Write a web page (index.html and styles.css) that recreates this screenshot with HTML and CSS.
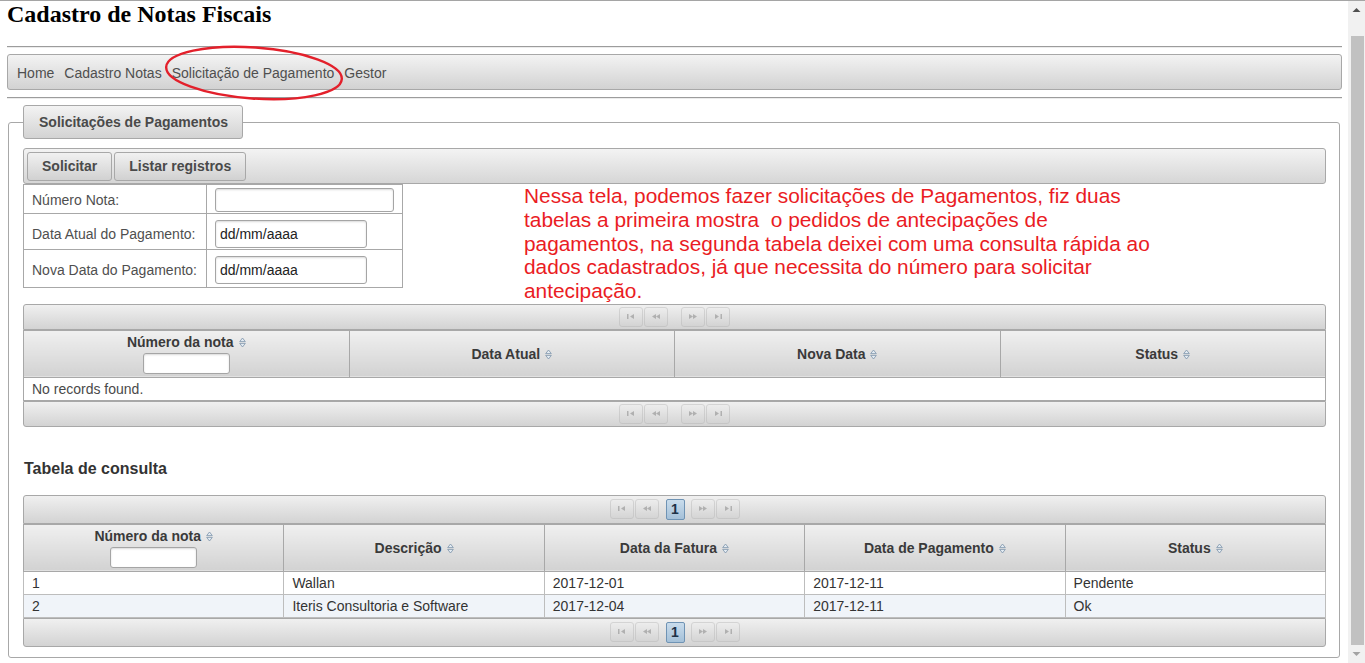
FILE: index.html
```html
<!DOCTYPE html>
<html lang="pt-BR">
<head>
<meta charset="utf-8">
<title>Cadastro de Notas Fiscais</title>
<link rel="stylesheet" href="styles.css">
</head>
<body>
<div class="screen">
  <div class="page">
    <h1 class="title">Cadastro de Notas Fiscais</h1>
    <hr class="rule">
    <nav class="menubar">
      <a class="menu-item">Home</a>
      <a class="menu-item">Cadastro Notas</a>
      <a class="menu-item">Solicitação de Pagamento</a>
      <a class="menu-item">Gestor</a>
    </nav>
    <svg class="highlight" width="184" height="62" viewBox="0 0 184 62"><ellipse cx="92" cy="31" rx="88" ry="25.5" transform="rotate(4 92 31)" fill="none" stroke="#e3202b" stroke-width="2.4"/></svg>
    <hr class="rule rule-bottom">

    <fieldset class="panel">
      <legend class="panel-legend">Solicitações de Pagamentos</legend>

      <div class="toolbar">
        <button class="btn" type="button">Solicitar</button>
        <button class="btn" type="button">Listar registros</button>
      </div>

      <div class="form-row">
        <table class="form-grid">
          <colgroup><col class="col-label"><col class="col-field"></colgroup>
          <tr>
            <td class="label">Número Nota:</td>
            <td><input class="field field-wide" type="text"></td>
          </tr>
          <tr class="date-row">
            <td class="label">Data Atual do Pagamento:</td>
            <td><input class="field field-date" type="text" value="dd/mm/aaaa"></td>
          </tr>
          <tr class="date-row">
            <td class="label">Nova Data do Pagamento:</td>
            <td><input class="field field-date" type="text" value="dd/mm/aaaa"></td>
          </tr>
        </table>
        <p class="note">Nessa tela, podemos fazer solicitações de Pagamentos, fiz duas<br>tabelas a primeira mostra&nbsp; o pedidos de antecipações de<br>pagamentos, na segunda tabela deixei com uma consulta rápida ao<br>dados cadastrados, já que necessita do número para solicitar<br>antecipação.</p>
      </div>

      <div class="datatable dt-requests">
        <div class="paginator paginator-top">
          <span class="pg-btn pg-gap"><svg width="10" height="7" viewBox="0 0 10 7"><rect x="1" y="1" width="1.5" height="5"/><path d="M8 1 L4 3.5 L8 6Z"/></svg></span>
          <span class="pg-btn"><svg width="10" height="7" viewBox="0 0 10 7"><path d="M5 1 L1 3.5 L5 6Z M9 1 L5 3.5 L9 6Z"/></svg></span>
          <span class="pg-pages"></span>
          <span class="pg-btn pg-gap"><svg width="10" height="7" viewBox="0 0 10 7"><path d="M1 1 L5 3.5 L1 6Z M5 1 L9 3.5 L5 6Z"/></svg></span>
          <span class="pg-btn"><svg width="10" height="7" viewBox="0 0 10 7"><path d="M2 1 L6 3.5 L2 6Z"/><rect x="7.5" y="1" width="1.5" height="5"/></svg></span>
        </div>
        <table class="dt-table">
          <thead>
            <tr>
              <th><span class="col-title">Número da nota<svg class="sort" width="7" height="11" viewBox="0 0 7 11"><path d="M0.7 4.6 L3.5 1 L6.3 4.6Z M0.7 6.4 L3.5 10 L6.3 6.4Z"/></svg></span><input class="col-filter" type="text"></th>
              <th><span class="col-title">Data Atual<svg class="sort" width="7" height="11" viewBox="0 0 7 11"><path d="M0.7 4.6 L3.5 1 L6.3 4.6Z M0.7 6.4 L3.5 10 L6.3 6.4Z"/></svg></span></th>
              <th><span class="col-title">Nova Data<svg class="sort" width="7" height="11" viewBox="0 0 7 11"><path d="M0.7 4.6 L3.5 1 L6.3 4.6Z M0.7 6.4 L3.5 10 L6.3 6.4Z"/></svg></span></th>
              <th><span class="col-title">Status<svg class="sort" width="7" height="11" viewBox="0 0 7 11"><path d="M0.7 4.6 L3.5 1 L6.3 4.6Z M0.7 6.4 L3.5 10 L6.3 6.4Z"/></svg></span></th>
            </tr>
          </thead>
          <tbody>
            <tr><td class="empty" colspan="4">No records found.</td></tr>
          </tbody>
        </table>
        <div class="paginator paginator-bottom">
          <span class="pg-btn pg-gap"><svg width="10" height="7" viewBox="0 0 10 7"><rect x="1" y="1" width="1.5" height="5"/><path d="M8 1 L4 3.5 L8 6Z"/></svg></span>
          <span class="pg-btn"><svg width="10" height="7" viewBox="0 0 10 7"><path d="M5 1 L1 3.5 L5 6Z M9 1 L5 3.5 L9 6Z"/></svg></span>
          <span class="pg-pages"></span>
          <span class="pg-btn pg-gap"><svg width="10" height="7" viewBox="0 0 10 7"><path d="M1 1 L5 3.5 L1 6Z M5 1 L9 3.5 L5 6Z"/></svg></span>
          <span class="pg-btn"><svg width="10" height="7" viewBox="0 0 10 7"><path d="M2 1 L6 3.5 L2 6Z"/><rect x="7.5" y="1" width="1.5" height="5"/></svg></span>
        </div>
      </div>

      <h3 class="section-title">Tabela de consulta</h3>

      <div class="datatable dt-consulta">
        <div class="paginator paginator-top has-pages">
          <span class="pg-btn pg-gap"><svg width="10" height="7" viewBox="0 0 10 7"><rect x="1" y="1" width="1.5" height="5"/><path d="M8 1 L4 3.5 L8 6Z"/></svg></span>
          <span class="pg-btn"><svg width="10" height="7" viewBox="0 0 10 7"><path d="M5 1 L1 3.5 L5 6Z M9 1 L5 3.5 L9 6Z"/></svg></span>
          <span class="pg-pages"><span class="pg-page">1</span></span>
          <span class="pg-btn pg-gap"><svg width="10" height="7" viewBox="0 0 10 7"><path d="M1 1 L5 3.5 L1 6Z M5 1 L9 3.5 L5 6Z"/></svg></span>
          <span class="pg-btn"><svg width="10" height="7" viewBox="0 0 10 7"><path d="M2 1 L6 3.5 L2 6Z"/><rect x="7.5" y="1" width="1.5" height="5"/></svg></span>
        </div>
        <table class="dt-table">
          <thead>
            <tr>
              <th><span class="col-title">Número da nota<svg class="sort" width="7" height="11" viewBox="0 0 7 11"><path d="M0.7 4.6 L3.5 1 L6.3 4.6Z M0.7 6.4 L3.5 10 L6.3 6.4Z"/></svg></span><input class="col-filter" type="text"></th>
              <th><span class="col-title">Descrição<svg class="sort" width="7" height="11" viewBox="0 0 7 11"><path d="M0.7 4.6 L3.5 1 L6.3 4.6Z M0.7 6.4 L3.5 10 L6.3 6.4Z"/></svg></span></th>
              <th><span class="col-title">Data da Fatura<svg class="sort" width="7" height="11" viewBox="0 0 7 11"><path d="M0.7 4.6 L3.5 1 L6.3 4.6Z M0.7 6.4 L3.5 10 L6.3 6.4Z"/></svg></span></th>
              <th><span class="col-title">Data de Pagamento<svg class="sort" width="7" height="11" viewBox="0 0 7 11"><path d="M0.7 4.6 L3.5 1 L6.3 4.6Z M0.7 6.4 L3.5 10 L6.3 6.4Z"/></svg></span></th>
              <th><span class="col-title">Status<svg class="sort" width="7" height="11" viewBox="0 0 7 11"><path d="M0.7 4.6 L3.5 1 L6.3 4.6Z M0.7 6.4 L3.5 10 L6.3 6.4Z"/></svg></span></th>
            </tr>
          </thead>
          <tbody>
            <tr class="row-even"><td>1</td><td>Wallan</td><td>2017-12-01</td><td>2017-12-11</td><td>Pendente</td></tr>
            <tr class="row-odd"><td>2</td><td>Iteris Consultoria e Software</td><td>2017-12-04</td><td>2017-12-11</td><td>Ok</td></tr>
          </tbody>
        </table>
        <div class="paginator paginator-bottom has-pages">
          <span class="pg-btn pg-gap"><svg width="10" height="7" viewBox="0 0 10 7"><rect x="1" y="1" width="1.5" height="5"/><path d="M8 1 L4 3.5 L8 6Z"/></svg></span>
          <span class="pg-btn"><svg width="10" height="7" viewBox="0 0 10 7"><path d="M5 1 L1 3.5 L5 6Z M9 1 L5 3.5 L9 6Z"/></svg></span>
          <span class="pg-pages"><span class="pg-page">1</span></span>
          <span class="pg-btn pg-gap"><svg width="10" height="7" viewBox="0 0 10 7"><path d="M1 1 L5 3.5 L1 6Z M5 1 L9 3.5 L5 6Z"/></svg></span>
          <span class="pg-btn"><svg width="10" height="7" viewBox="0 0 10 7"><path d="M2 1 L6 3.5 L2 6Z"/><rect x="7.5" y="1" width="1.5" height="5"/></svg></span>
        </div>
      </div>
    </fieldset>
  </div>

  <div class="scrollbar">
    <div class="sb-btn"><svg width="17" height="17" viewBox="0 0 17 17"><path d="M4.5 11 L8.5 7 L12.5 11Z" fill="#505050"/></svg></div>
    <div class="sb-track"><div class="sb-thumb"></div></div>
    <div class="sb-btn"><svg width="17" height="17" viewBox="0 0 17 17"><path d="M4.5 6 L8.5 10 L12.5 6Z" fill="#a3a3a3"/></svg></div>
  </div>
</div>
</body>
</html>
```

FILE: styles.css
```css
html, body {
  margin: 0;
  padding: 0;
  background: #ffffff;
}

body {
  font-family: "Liberation Sans", Arial, sans-serif;
  font-size: 14px;
  line-height: 16px;
  color: #333333;
}

.screen {
  display: flex;
  height: 663px;
  box-sizing: border-box;
  border-top: 1px solid #a5a5a5;
  overflow: hidden;
}

.page {
  position: relative;
  flex: 1;
  min-width: 0;
  padding: 0 6px 0 7px;
  overflow: hidden;
}

.title {
  margin: 0;
  font-family: "Liberation Serif", "Times New Roman", serif;
  font-size: 24px;
  line-height: 26px;
  font-weight: bold;
  color: #000000;
}

.rule {
  height: 0;
  margin: 19px 0 6px;
  border: 0;
  border-top: 1px solid #9c9c9c;
  border-bottom: 1px solid #ececec;
}

.rule-bottom {
  margin: 7px 0 6px;
}

.menubar {
  display: flex;
  gap: 10px;
  padding: 10px 9px 8px;
  border: 1px solid #a8a8a8;
  border-radius: 3px;
  background: linear-gradient(#f3f3f3, #d2d2d2);
}

.menu-item {
  color: #4f4f4f;
  text-decoration: none;
  white-space: nowrap;
}

.highlight {
  position: absolute;
  left: 162px;
  top: 41px;
}

.panel {
  margin: 0 2px 0 1px;
  padding: 9px 13px 10px 14px;
  border: 1px solid #a8a8a8;
  border-radius: 3px;
  min-width: 0;
}

.panel-legend {
  padding: 8px 14px 8px 15px;
  border: 1px solid #a8a8a8;
  border-radius: 3px;
  background: linear-gradient(#f3f3f3, #d3d3d3);
  font-weight: bold;
  color: #4a4a4a;
}

.toolbar {
  display: flex;
  gap: 2px;
  padding: 3px 3px 2px;
  border: 1px solid #a8a8a8;
  border-radius: 3px;
  background: linear-gradient(#f3f3f3, #d6d6d6);
}

.btn {
  margin: 0;
  padding: 5px 14px 6px;
  border: 1px solid #a8a8a8;
  border-radius: 3px;
  background: linear-gradient(#f1f1f1, #d1d1d1);
  font-family: "Liberation Sans", Arial, sans-serif;
  font-size: 14px;
  line-height: 16px;
  font-weight: bold;
  color: #4a4a4a;
}

.form-row {
  display: flex;
  align-items: flex-start;
  gap: 121px;
}

.form-grid {
  width: 379px;
  table-layout: fixed;
  border-collapse: collapse;
}

.col-label { width: 183px; }
.col-field { width: 196px; }

.form-grid td {
  padding: 3px 8px 1px;
  border: 1px solid #a8a8a8;
  vertical-align: bottom;
  color: #4f4f4f;
  white-space: nowrap;
}

.form-grid td.label {
  vertical-align: middle;
}

.form-grid .date-row td {
  padding-top: 6px;
}

.form-grid tr:last-child td {
  padding-bottom: 3px;
}

.field {
  display: block;
  box-sizing: border-box;
  margin: 0;
  padding: 0 4px;
  border: 1px solid #a5a5a5;
  border-radius: 3px;
  box-shadow: inset 0 1px 2px rgba(0, 0, 0, 0.15);
  background: #ffffff;
  font-family: "Liberation Sans", Arial, sans-serif;
  font-size: 14px;
  color: #222222;
}

.field-wide {
  width: 179px;
  height: 24px;
}

.field-date {
  width: 152px;
  height: 28px;
}

.note {
  margin: 0;
  font-size: 20.85px;
  line-height: 23.75px;
  color: #ea1c24;
  white-space: nowrap;
}

.dt-requests {
  margin-top: 1px;
}

.paginator {
  display: flex;
  justify-content: center;
  align-items: flex-start;
  padding: 2px;
  border: 1px solid #a8a8a8;
  background: linear-gradient(#f0f0f0, #d3d3d3);
}

.paginator.has-pages {
  padding: 3px 2px;
}

.paginator-top {
  border-radius: 3px 3px 0 0;
}

.paginator-bottom {
  border-radius: 0 0 3px 3px;
}

.pg-btn {
  display: flex;
  align-items: center;
  justify-content: center;
  box-sizing: border-box;
  width: 24px;
  height: 20px;
  border: 1px solid #a8a8a8;
  border-radius: 3px;
  background: linear-gradient(#efefef, #cfcfcf);
  opacity: 0.35;
}

.pg-btn svg {
  fill: #555555;
}

.pg-gap {
  margin-right: 1px;
}

.pg-pages {
  display: flex;
  margin: 0 6px 0 7px;
}

.pg-page {
  display: flex;
  align-items: center;
  justify-content: center;
  box-sizing: border-box;
  width: 19px;
  height: 21px;
  border: 1px solid #6f93b4;
  border-radius: 2px;
  background: linear-gradient(#c9dcec, #a4c0d8);
  font-size: 14px;
  font-weight: bold;
  color: #1e3247;
}

.dt-table {
  width: 100%;
  table-layout: fixed;
  border-collapse: collapse;
}

.dt-table th {
  padding: 3px 10px 3px;
  border: 1px solid #a8a8a8;
  background: linear-gradient(#f0f0f0, #d2d2d2);
  font-weight: bold;
  color: #3a3a3a;
  text-align: center;
  vertical-align: middle;
  white-space: nowrap;
}

.col-title {
  display: inline-block;
}

.sort {
  margin-left: 5px;
  vertical-align: -1px;
  fill: #e4ecf3;
  stroke: #7c93aa;
  stroke-width: 0.8;
}

.col-filter {
  display: block;
  box-sizing: border-box;
  width: 87px;
  height: 21px;
  margin: 3px auto 0;
  padding: 0 4px;
  border: 1px solid #a5a5a5;
  border-radius: 3px;
  box-shadow: inset 0 1px 2px rgba(0, 0, 0, 0.15);
  background: #ffffff;
}

.dt-table td {
  padding: 3px 8px;
  border: 1px solid #bdbdbd;
  color: #333333;
  white-space: nowrap;
  overflow: hidden;
}

.dt-table td.empty {
  border-color: #a8a8a8;
  color: #4a4a4a;
  background: #ffffff;
}

.row-even td {
  background: #ffffff;
}

.row-odd td {
  background: #f0f4f9;
}

.section-title {
  margin: 33px 0 17px 1px;
  font-size: 16px;
  line-height: 18px;
  font-weight: bold;
  color: #333333;
}

.scrollbar {
  display: flex;
  flex-direction: column;
  width: 17px;
  flex: none;
  background: #f1f1f1;
}

.sb-btn {
  height: 17px;
  flex: none;
}

.sb-btn svg {
  display: block;
}

.sb-track {
  flex: 1;
  padding-top: 18px;
}

.sb-thumb {
  height: 609px;
  margin: 0 1px 0 3px;
  background: #c1c1c1;
}
```
